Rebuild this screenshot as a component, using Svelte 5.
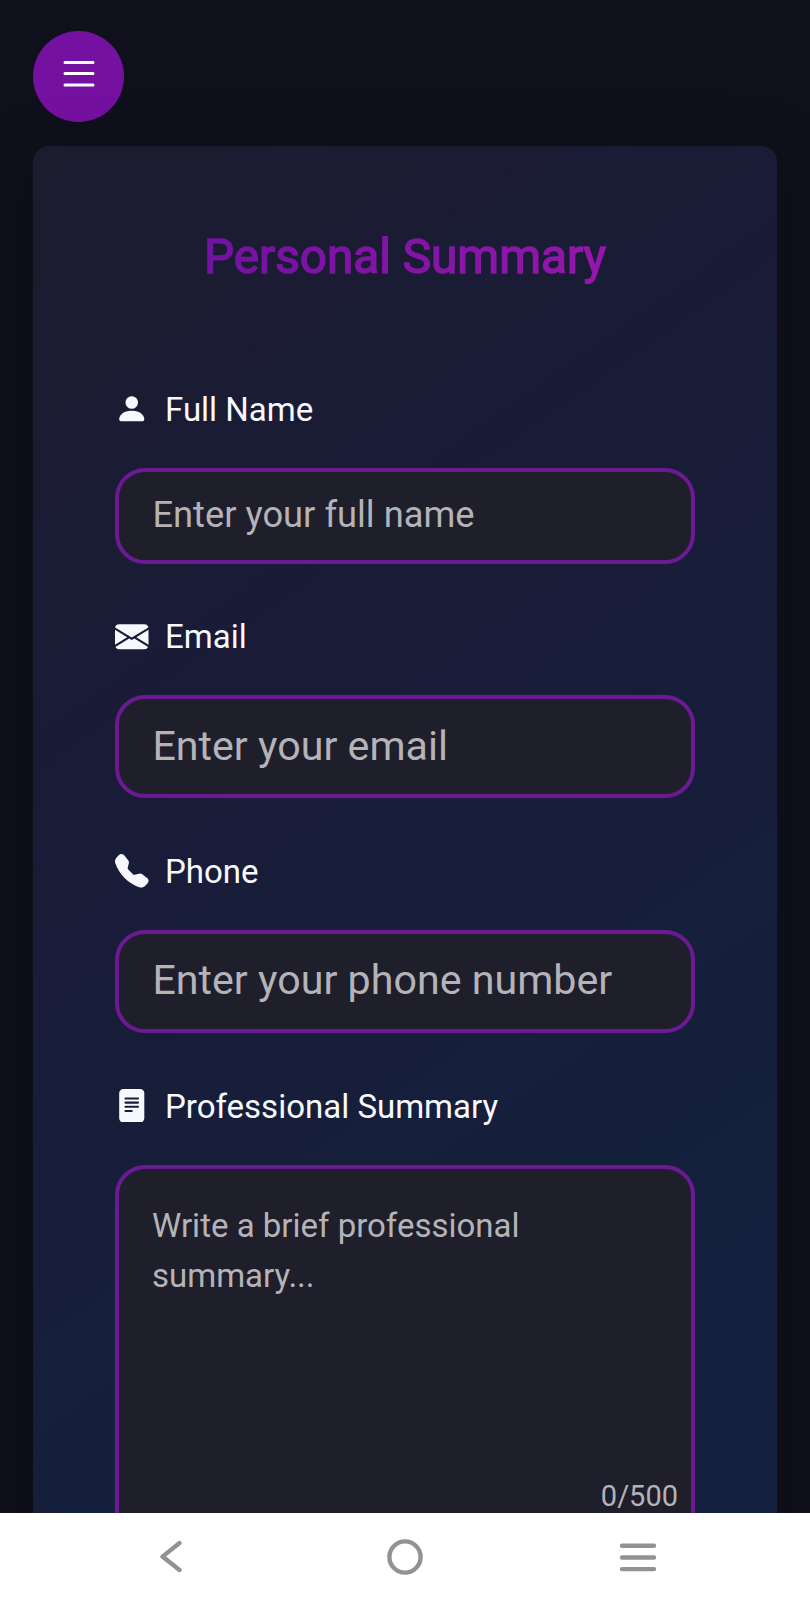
<script>
  const fields = [
    { id: 'name', label: 'Full Name', hint: 'Enter your full name', size: 'compact', icon: 'person' },
    { id: 'email', label: 'Email', hint: 'Enter your email', size: 'large', icon: 'mail' },
    { id: 'phone', label: 'Phone', hint: 'Enter your phone number', size: 'large', icon: 'phone' }
  ];
  const icons = {
    person: 'M3 14s-1 0-1-1 1-4 6-4 6 3 6 4-1 1-1 1zm5-6a3 3 0 1 0 0-6 3 3 0 0 0 0 6',
    mail: 'M.05 3.555A2 2 0 0 1 2 2h12a2 2 0 0 1 1.95 1.555L8 8.414zM0 4.697v7.104l5.803-3.558zM6.761 8.83l-6.57 4.027A2 2 0 0 0 2 14h12a2 2 0 0 0 1.808-1.144l-6.57-4.027L8 9.586zm3.436-.586L16 11.801V4.697z',
    phone: 'M1.885.511a1.745 1.745 0 0 1 2.61.163L6.29 2.98c.329.423.445.974.315 1.494l-.547 2.19a.68.68 0 0 0 .178.643l2.457 2.457a.68.68 0 0 0 .644.178l2.189-.547a1.75 1.75 0 0 1 1.494.315l2.306 1.794c.829.645.905 1.87.163 2.611l-1.034 1.034c-.74.74-1.846 1.065-2.877.702a18.6 18.6 0 0 1-7.01-4.42 18.6 18.6 0 0 1-4.42-7.009c-.362-1.03-.037-2.137.703-2.877z',
    file: 'M12 0H4a2 2 0 0 0-2 2v12a2 2 0 0 0 2 2h8a2 2 0 0 0 2-2V2a2 2 0 0 0-2-2M5 4h6a.5.5 0 0 1 0 1H5a.5.5 0 0 1 0-1m-.5 2.5A.5.5 0 0 1 5 6h6a.5.5 0 0 1 0 1H5a.5.5 0 0 1-.5-.5M5 8h6a.5.5 0 0 1 0 1H5a.5.5 0 0 1 0-1m0 2h3a.5.5 0 0 1 0 1H5a.5.5 0 0 1 0-1'
  };
  let summary = $state('');
</script>

<div class="screen">
  <main>
    <button class="menu" aria-label="Menu">
      <svg width="32" height="28" viewBox="0 0 32 28" fill="none" stroke="currentColor" stroke-width="3" stroke-linecap="round">
        <path d="M2 2.4h28M2 13.6h28M2 24.9h28" />
      </svg>
    </button>
    <section class="card">
      <h1><span>Personal Summary</span></h1>
      <form>
        {#each fields as f}
          <div class="field">
            <label for={f.id}>
              <svg class="icon" viewBox="0 0 16 16" fill="currentColor"><path d={icons[f.icon]} /></svg>
              {f.label}
            </label>
            <input id={f.id} class={f.size} placeholder={f.hint} />
          </div>
        {/each}
        <div class="field">
          <label for="summary">
            <svg class="icon" viewBox="0 0 16 16" fill="currentColor"><path d={icons.file} /></svg>
            Professional Summary
          </label>
          <div class="area">
            <textarea id="summary" placeholder="Write a brief professional summary..." maxlength="500" bind:value={summary}></textarea>
            <span class="count">{summary.length}/500</span>
          </div>
        </div>
      </form>
    </section>
  </main>
  <nav>
    <svg width="22" height="34" viewBox="0 0 22 34"><path d="M19.5 3 2.5 16.6 19.5 30" /></svg>
    <svg class="home" width="36" height="36" viewBox="0 0 36 36"><circle cx="18" cy="18" r="15.6" /></svg>
    <svg width="38" height="30" viewBox="0 0 38 30"><path d="M3 3.8h32M3 15.5h32M3 27.1h32" /></svg>
  </nav>
</div>

<style>
  :global(body) {
    margin: 0;
    background: #10101c;
  }
  .screen {
    width: 810px;
    height: 1600px;
    display: flex;
    flex-direction: column;
    overflow: hidden;
    background: #10101c;
    font-family: Roboto, sans-serif;
    color: #f8f9fe;
  }
  main {
    flex: 1;
    min-height: 0;
    overflow: hidden;
    padding: 31px 33px 0;
  }
  .menu {
    display: flex;
    align-items: center;
    justify-content: center;
    width: 91px;
    height: 91px;
    padding: 0 0 6px;
    margin: 0 0 24.4px;
    border: 0;
    border-radius: 50%;
    background: #7511a0;
    color: #fff;
    box-sizing: border-box;
  }
  .card {
    height: 1640px;
    padding: 0 82px;
    box-sizing: border-box;
    border-radius: 16px;
    background: linear-gradient(145deg, #1c1c2f 0%, #1a1b36 25%, #151f3c 62%, #13213f 100%);
    box-shadow: 0 16px 66px rgba(0, 0, 0, 0.25);
  }
  h1 {
    box-sizing: border-box;
    margin: 0;
    padding-top: 82px;
    height: 238.6px;
    text-align: center;
    font-size: 47.7px;
    line-height: 58px;
    font-weight: 400;
  }
  h1 span {
    display: block;
    color: transparent;
    -webkit-text-stroke: 1.5px transparent;
    background: linear-gradient(90deg, #6a11a0, #9c18ac);
    -webkit-background-clip: text;
    background-clip: text;
  }
  form {
    display: flex;
    flex-direction: column;
    gap: 48.9px;
  }
  label {
    display: flex;
    align-items: center;
    gap: 16.5px;
    height: 50px;
    margin-bottom: 33px;
    font-size: 33px;
    line-height: 50px;
  }
  .icon {
    width: 33.5px;
    height: 33.5px;
    margin-bottom: 2px;
  }
  input,
  textarea {
    display: block;
    width: 580px;
    box-sizing: border-box;
    border: 4px solid #6b1a93;
    border-radius: 30px;
    background: #1f1e2b;
    color: #f8f9fe;
    font-family: inherit;
    outline: none;
    resize: none;
  }
  input {
    padding: 0 33px 2.4px 33.4px;
  }
  .compact {
    height: 95.6px;
    font-size: 36.3px;
  }
  .large {
    height: 102.7px;
    font-size: 41.2px;
  }
  ::placeholder {
    color: #b4b3b8;
    opacity: 1;
  }
  .area {
    position: relative;
  }
  textarea {
    height: 412px;
    padding: 32.6px 33px;
    font-size: 33px;
    line-height: 49.3px;
    overflow: hidden;
  }
  .count {
    position: absolute;
    right: 17px;
    top: 317px;
    font-size: 29px;
    line-height: 29px;
    color: #b4b3b8;
  }
  nav {
    height: 87px;
    display: flex;
    align-items: center;
    justify-content: space-between;
    padding: 0 153px 0 160px;
    background: #fff;
  }
  nav svg {
    fill: none;
    stroke: #929292;
    stroke-width: 4.4;
    stroke-linecap: round;
    stroke-linejoin: round;
  }
  nav .home {
    margin-left: 9px;
  }
</style>
